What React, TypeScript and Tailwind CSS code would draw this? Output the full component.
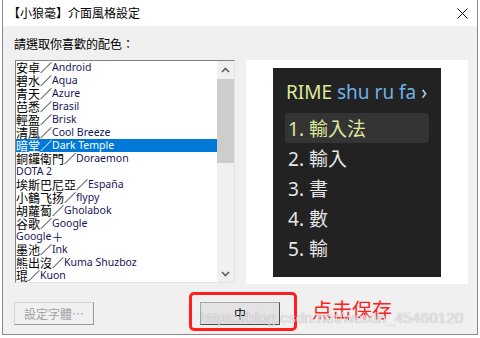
import React from "react";

type Item = { cjk?: string; latin?: string; plus?: boolean };

const items: Item[] = [
  { cjk: "安卓", latin: "Android" },
  { cjk: "碧水", latin: "Aqua" },
  { cjk: "青天", latin: "Azure" },
  { cjk: "芭悉", latin: "Brasil" },
  { cjk: "輕盈", latin: "Brisk" },
  { cjk: "清風", latin: "Cool Breeze" },
  { cjk: "暗堂", latin: "Dark Temple" },
  { cjk: "銅鑼衛門", latin: "Doraemon" },
  { latin: "DOTA 2" },
  { cjk: "埃斯巴尼亞", latin: "España" },
  { cjk: "小鶴飞扬", latin: "flypy" },
  { cjk: "胡蘿蔔", latin: "Gholabok" },
  { cjk: "谷歌", latin: "Google" },
  { latin: "Google", plus: true },
  { cjk: "墨池", latin: "Ink" },
  { cjk: "熊出沒", latin: "Kuma Shuzboz" },
  { cjk: "琨", latin: "Kuon" },
];

const CJK = "font-['Noto_Sans_CJK_TC',sans-serif]";
const LAT = "font-['Noto_Sans','Noto_Sans_CJK_TC',sans-serif]";

function Chevron({ up }: { up?: boolean }) {
  return (
    <svg width="9" height="6" viewBox="0 0 9 6">
      <path
        d={up ? "M1 5 L4.5 1.5 L8 5" : "M1 1 L4.5 4.5 L8 1"}
        fill="none"
        stroke="#606060"
        strokeWidth="1.6"
      />
    </svg>
  );
}

export default function App() {
  return (
    <div className="relative w-[480px] h-[338px] bg-white overflow-hidden">
      <div className="ml-[2px] w-[476px] h-[335px] border-x border-b border-[#8a8a8a] flex flex-col">
        {/* title bar */}
        <div className="h-[26px] bg-white flex items-center justify-between pl-[5px] pr-[9px]">
          <span className={`${CJK} text-[12px] leading-[16px] text-black`}>【小狼毫】介面風格設定</span>
          <svg width="11" height="11" viewBox="0 0 11 11">
            <path d="M0.5 0.5 L10.5 10.5 M10.5 0.5 L0.5 10.5" stroke="#111" strokeWidth="1" />
          </svg>
        </div>
        {/* body */}
        <div className="flex-1 bg-[#f0f0f0] pl-[11px] pt-[10px]">
          <div className={`${CJK} text-[12px] leading-[16px] text-black`}>請選取你喜歡的配色：</div>
          <div className="mt-[8px] flex">
            {/* list box */}
            <div className="ml-[1px] w-[220px] h-[223px] border border-t-[#828282] border-l-[#828282] border-b-[#e3e3e3] border-r-[#e3e3e3] bg-white flex">
              <div className="w-[201px] overflow-hidden">
                {items.map((it, i) => {
                  const sel = i === 6;
                  return (
                    <div
                      key={i}
                      className={`h-[13px] flex items-end whitespace-nowrap ${sel ? "bg-[#0078d7]" : ""}`}
                    >
                      {it.cjk && (
                        <span className={`${CJK} text-[12px] leading-[13px] ${sel ? "text-white" : "text-black"}`}>
                          {it.cjk}／
                        </span>
                      )}
                      <span className={`${LAT} text-[10.5px] leading-[13px] ${sel ? "text-white" : "text-[#16165a]"}`}>
                        {it.latin}
                      </span>
                      {it.plus && (
                        <span className={`${CJK} text-[12px] leading-[13px] text-[#16165a]`}>＋</span>
                      )}
                    </div>
                  );
                })}
              </div>
              <div className="w-[17px] bg-[#f0f0f0] flex flex-col">
                <div className="h-[17px] flex items-center justify-center">
                  <Chevron up />
                </div>
                <div className="mt-[1px] h-[84px] bg-[#cdcdcd]" />
                <div className="flex-1" />
                <div className="h-[17px] flex items-center justify-center">
                  <Chevron />
                </div>
              </div>
            </div>
            {/* preview */}
            <div className="ml-[11px] w-[222px] h-[224px] bg-white flex justify-center pt-[8px] pl-[0px]">
              <div className="w-[168px] h-[209px] bg-[#222222] pt-[11px] pl-[12px]">
                <div className={`${LAT} text-[19px] leading-[26px] pl-[1px] whitespace-nowrap`}>
                  <span className="text-[#dfe99a]">RIME</span>{" "}
                  <span className="text-[#6cb2ea]">shu ru fa</span>{" "}
                  <span className="text-[#b9d8f2]">›</span>
                </div>
                <div className="mt-[8px]">
                  {["輸入法", "輸入", "書", "數", "輸"].map((c, i) => (
                    <div
                      key={i}
                      className={`w-[144px] h-[30px] pl-[3px] pt-[1px] rounded-[3px] ${LAT} text-[19px] leading-[30px] whitespace-nowrap ${
                        i === 0 ? "bg-[#343434] text-[#dfe99a]" : "text-[#e6e6e6]"
                      }`}
                    >
                      {i + 1}. {c}
                    </div>
                  ))}
                </div>
              </div>
            </div>
          </div>
          {/* buttons */}
          <div className="mt-[18px] flex">
            <div className="w-[80px] h-[23px] border border-t-[#d6d6d6] border-l-[#d6d6d6] border-b-[#9a9a9a] border-r-[#9a9a9a] bg-[#f0f0f0] flex items-center justify-center">
              <span className={`${CJK} text-[12px] leading-[14px] text-[#a3a3a3]`}>設定字體…</span>
            </div>
            <div className="ml-[106px] w-[80px] h-[23px] border border-t-[#a8a8a8] border-l-[#a8a8a8] border-b-[#505050] border-r-[#505050] bg-[#e3e3e3] flex items-center justify-center">
              <span className={`${CJK} text-[12px] leading-[14px] text-black`}>中</span>
            </div>
          </div>
        </div>
      </div>
      {/* annotation */}
      <div className="absolute left-[189px] top-[292px] w-[108px] h-[39px] border-[3px] border-[#ff1f1f] rounded-[5px]" />
      <div className="absolute left-[312px] top-[297px] font-['Noto_Sans_CJK_SC',sans-serif] text-[20px] leading-[26px] text-[#ff2020]">
        点击保存
      </div>
      {/* watermark */}
      <div
        className="absolute left-[200px] top-[308px] font-['Liberation_Sans',Arial,sans-serif] text-[15.5px] leading-[20px] text-white/75 whitespace-nowrap"
        style={{ textShadow: "0 0 1px rgba(0,0,0,0.4)" }}
      >
        https://blog.csdn.net/weixin_45460120
      </div>
    </div>
  );
}
